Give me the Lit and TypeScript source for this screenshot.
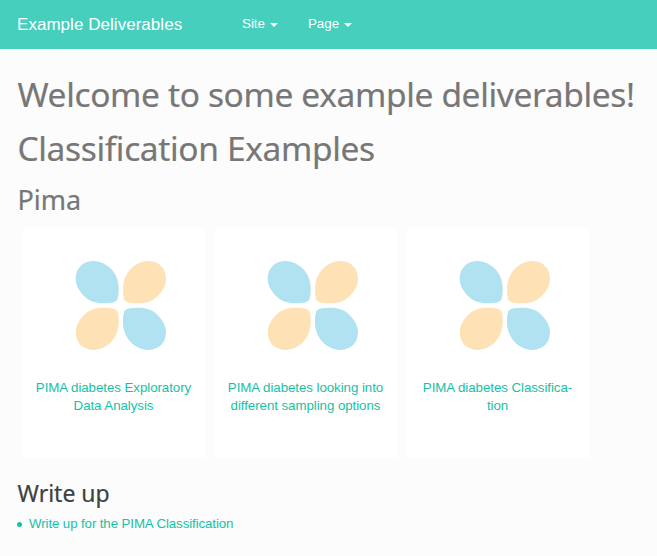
import { LitElement, html, css, svg } from "lit";
import { customElement, property } from "lit/decorators.js";

const PETAL =
  "M53 0C74 0 94 11 109 27C122 42 129 62 129 84C129 102 127 115 122 120C116 125 101 127 80 127C60 127 41 121 26 106C10 89 0 73 0 53C0 22 22 0 53 0Z";

@customElement("petal-logo")
class PetalLogo extends LitElement {
  static styles = css`
    :host { display: block; width: 91px; height: 90px; }
    svg { display: block; width: 91px; height: 90px; }
    .blue { fill: #b1e2f1; }
    .sand { fill: #fee1b5; }
  `;
  render() {
    return html`<svg viewBox="0 0 273 270" aria-hidden="true">
      ${svg`
        <path class="blue" d=${PETAL} transform="translate(2 0)" />
        <path class="sand" d=${PETAL} transform="translate(273 0) scale(-1 1)" />
        <path class="sand" d=${PETAL} transform="translate(2 267) scale(1 -1)" />
        <path class="blue" d=${PETAL} transform="translate(273 267) scale(-1 -1)" />
      `}
    </svg>`;
  }
}

@customElement("example-card")
class ExampleCard extends LitElement {
  @property({ attribute: false }) lines: string[] = [];
  static styles = css`
    :host {
      display: flex; flex-direction: column; align-items: center;
      box-sizing: border-box; width: 182px; height: 230px;
      padding-top: 33px; background: #fff; border-radius: 4px;
    }
    petal-logo { margin-left: 13px; }
    .title {
      margin: 28px 1px 0 0; font-size: 13.33px; line-height: 18px; letter-spacing: -0.07px;
      color: #18c1a5; text-align: center; text-decoration: none; white-space: nowrap;
    }
    .line { display: block; }
  `;
  render() {
    return html`<petal-logo></petal-logo>
      <a class="title" href="#">${this.lines.map((l) => html`<span class="line">${l}</span>`)}</a>`;
  }
}

@customElement("app-root")
class AppRoot extends LitElement {
  static styles = css`
    :host {
      display: block; height: 556px; overflow: hidden; background: #fcfcfc;
      font-family: "Liberation Sans", Arial, sans-serif;
    }
    .nav {
      display: flex; align-items: center; height: 49px; box-sizing: border-box;
      padding: 0 18px 1px 17px; background: #45cfbc; color: #fff;
    }
    .brand {
      width: 225px; padding-top: 1px; font-size: 17px; line-height: 24px;
      letter-spacing: 0.04px; white-space: nowrap;
    }
    .item { display: flex; align-items: center; font-size: 13.33px; line-height: 20px; margin-right: 30px; }
    .caret {
      margin: 2px 0 0 5px; border: 4px solid transparent;
      border-top-color: #fff; border-bottom: 0;
    }
    .content { padding: 18px 0 0 17px; }
    h1, h2, h3 {
      margin: 0; padding-left: 0.5px; font-family: "Noto Sans", "Open Sans", sans-serif;
      font-weight: 400; white-space: nowrap; -webkit-text-stroke: 0.2px currentColor;
    }
    h1 { font-size: 33.5px; line-height: 54px; color: #777; letter-spacing: -0.36px; }
    h2 { font-size: 27px; line-height: 49px; color: #777; }
    h3 { font-size: 23px; line-height: 32px; color: #404040; margin-top: 19px; }
    .cards { display: flex; gap: 10px; margin: 4px 0 0 6px; }
    .links {
      margin: 5px 0 0; padding: 0; list-style: none; font-size: 13.33px;
      line-height: 20px; letter-spacing: -0.12px; color: #18c1a5;
    }
    .link { display: flex; align-items: center; gap: 7px; }
    .dot { width: 5px; height: 5px; border-radius: 50%; background: currentColor; }
    .link a { color: inherit; text-decoration: none; }
  `;
  private cards = [
    ["PIMA diabetes Exploratory", "Data Analysis"],
    ["PIMA diabetes looking into", "different sampling options"],
    ["PIMA diabetes Classifica-", "tion"],
  ];
  render() {
    return html`
      <nav class="nav">
        <span class="brand">Example Deliverables</span>
        <span class="item">Site<i class="caret"></i></span>
        <span class="item">Page<i class="caret"></i></span>
      </nav>
      <main class="content">
        <h1>Welcome to some example deliverables!</h1>
        <h1>Classification Examples</h1>
        <h2>Pima</h2>
        <div class="cards">
          ${this.cards.map((lines) => html`<example-card .lines=${lines}></example-card>`)}
        </div>
        <h3>Write up</h3>
        <ul class="links">
          <li class="link"><i class="dot"></i><a href="#">Write up for the PIMA Classification</a></li>
        </ul>
      </main>
    `;
  }
}
